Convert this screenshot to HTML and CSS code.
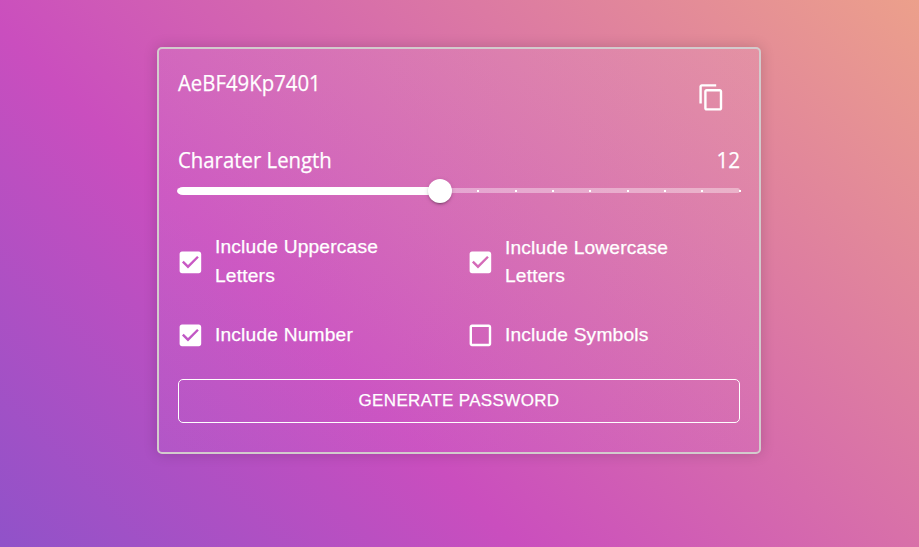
FILE: index.html
```
<!DOCTYPE html>
<html lang="en">
<head>
<meta charset="utf-8">
<title>Password Generator</title>
<link rel="stylesheet" href="styles.css">
</head>
<body>
<main class="card">
  <header class="result">
    <span class="password">AeBF49Kp7401</span>
    <button class="copy" aria-label="Copy"><svg viewBox="0 0 24 24"><path d="M16 1H4c-1.100 0-2 .9-2 2v14h2V3h12V1zm3 4H8c-1.100 0-2 .9-2 2v14c0 1.100.9 2 2 2h11c1.100 0 2-.9 2-2V7c0-1.100-.9-2-2-2zm0 16H8V7h11v14z"/></svg></button>
  </header>
  <div class="length"><span class="name">Charater Length</span><span class="value">12</span></div>
  <div class="slider">
    <div class="rail"></div>
    <div class="track"></div>
    <div class="marks"><i></i><i></i><i></i><i></i><i></i><i></i><i></i><i></i><i></i><i></i><i></i><i></i><i></i><i></i><i></i><i></i></div>
    <div class="thumb"></div>
  </div>
  <section class="options">
    <label class="option"><svg viewBox="0 0 24 24"><path d="M19 3H5c-1.110 0-2 .9-2 2v14c0 1.100.89 2 2 2h14c1.110 0 2-.9 2-2V5c0-1.100-.89-2-2-2zm-9 14l-5-5 1.410-1.410L10 14.170l7.590-7.590L19 8l-9 9z"/></svg><span>Include Uppercase Letters</span></label>
    <label class="option"><svg viewBox="0 0 24 24"><path d="M19 3H5c-1.110 0-2 .9-2 2v14c0 1.100.89 2 2 2h14c1.110 0 2-.9 2-2V5c0-1.100-.89-2-2-2zm-9 14l-5-5 1.410-1.410L10 14.170l7.590-7.590L19 8l-9 9z"/></svg><span class="tight">Include Lowercase Letters</span></label>
    <label class="option"><svg viewBox="0 0 24 24"><path d="M19 3H5c-1.110 0-2 .9-2 2v14c0 1.100.89 2 2 2h14c1.110 0 2-.9 2-2V5c0-1.100-.89-2-2-2zm-9 14l-5-5 1.410-1.410L10 14.170l7.590-7.590L19 8l-9 9z"/></svg><span>Include Number</span></label>
    <label class="option"><svg viewBox="0 0 24 24"><path d="M19 5v14H5V5h14m0-2H5c-1.100 0-2 .9-2 2v14c0 1.100.9 2 2 2h14c1.100 0 2-.9 2-2V5c0-1.100-.9-2-2-2z"/></svg><span>Include Symbols</span></label>
  </section>
  <button class="generate">GENERATE PASSWORD</button>
</main>
</body>
</html>
```
FILE: styles.css
```
* { box-sizing: border-box; }
body {
  margin: 0;
  height: 547px;
  padding-top: 47px;
  overflow: hidden;
  color: #fff;
  background: linear-gradient(45deg, #9052c9 0%, #ca4ebe 35.5%, #eca08b 100%);
  font-family: "Liberation Sans", Arial, sans-serif;
  -webkit-text-stroke: 0.25px #fff;
}
.card {
  width: 604px;
  height: 407px;
  margin: 0 auto 0 157px;
  padding: 19px;
  border: 2px solid #d3cbcd;
  border-radius: 5px;
  background: linear-gradient(rgba(225, 165, 220, 0.18), rgba(215, 130, 225, 0.12));
  box-shadow: 0 0 14px rgba(0, 0, 0, 0.17);
}
.result { display: flex; justify-content: space-between; height: 77px; margin-top: -1px; }
.password, .length { font: 22px/30px "Open Sans", "Noto Sans", sans-serif; }
.password, .name { transform: scaleX(0.925); transform-origin: left; }
.value { transform: scaleX(0.94); transform-origin: right; }
.copy { width: 29px; height: 29px; padding: 0; margin: 16px 14.5px 0 0; border: 0; background: none; }
.password { height: 30px; }
svg { display: block; width: 28.8px; height: 28.8px; fill: #fff; flex: none; }
.length { display: flex; justify-content: space-between; height: 35px; }
.slider { position: relative; height: 24px; }
.rail, .track { position: absolute; left: 0; top: 9px; height: 5px; border-radius: 4px; background: #fff; }
.rail { width: 100%; opacity: .38; }
.track { left: -1px; width: 46.67%; top: 8px; height: 7.500px; border-radius: 6px / 4px; }
.marks { position: absolute; inset: 11px -1px 0 0; display: flex; justify-content: space-between; }
.marks i { width: 2px; height: 2px; background: #fff; }
.thumb { position: absolute; left: calc(46.67% - 12px); top: 0; width: 24px; height: 24px; border-radius: 50%; background: #fff; box-shadow: 0 3px 1px -2px rgba(0,0,0,.2), 0 2px 2px rgba(0,0,0,.14), 0 1px 5px rgba(0,0,0,.12); }
.options { display: grid; grid-template-columns: 290px 1fr; grid-template-rows: 88px 58px; margin-top: 15px; }
.option { display: flex; align-items: center; gap: 10.200px; font-size: 19.200px; line-height: 29px; letter-spacing: 0.18px; }
.option svg { margin-left: -2px; }
.option span { width: 180px; margin-top: -2px; }
.option .tight { line-height: 28px; margin-top: -1px; }
.generate { display: block; width: 100%; height: 44px; margin-top: 15px; padding: 0; border: 1px solid #fff; border-radius: 5px; background: none; color: #fff; font: 17px "Liberation Sans", Arial, sans-serif; letter-spacing: 0.36px; -webkit-text-stroke: 0.25px #fff; }
```
